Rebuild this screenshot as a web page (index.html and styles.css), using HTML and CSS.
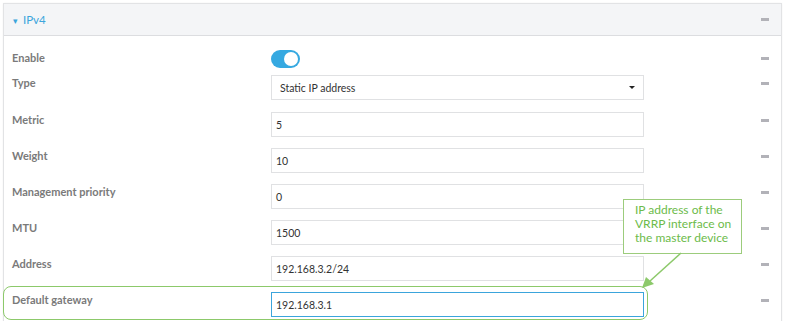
FILE: index.html
```html
<!DOCTYPE html>
<html lang="en">
<head>
  <meta charset="utf-8" />
  <title>IPv4</title>
  <link rel="stylesheet" href="styles.css">
</head>
<body>
  <div class="card">
    <div class="card-head">
      <span class="title"><span class="caret">&#9662;</span> IPv4</span>
      <span class="dash"></span>
    </div>

    <div class="rows">
      <div class="row row-toggle">
        <label>Enable</label>
        <div class="ctrl"><span class="toggle"><span class="knob"></span></span></div>
        <span class="dash"></span>
      </div>
      <div class="row row-type">
        <label>Type</label>
        <div class="ctrl"><div class="select">Static IP address<span class="arrow"></span></div></div>
        <span class="dash"></span>
      </div>
      <div class="row">
        <label>Metric</label>
        <div class="ctrl"><div class="input">5</div></div>
        <span class="dash"></span>
      </div>
      <div class="row">
        <label>Weight</label>
        <div class="ctrl"><div class="input">10</div></div>
        <span class="dash"></span>
      </div>
      <div class="row">
        <label>Management priority</label>
        <div class="ctrl"><div class="input">0</div></div>
        <span class="dash"></span>
      </div>
      <div class="row">
        <label>MTU</label>
        <div class="ctrl"><div class="input">1500</div></div>
        <span class="dash"></span>
      </div>
      <div class="row">
        <label>Address</label>
        <div class="ctrl"><div class="input">192.168.3.2/24</div></div>
        <span class="dash"></span>
      </div>
      <div class="row row-hl">
        <span class="highlight"></span>
        <label>Default gateway</label>
        <div class="ctrl"><div class="input focus">192.168.3.1</div></div>
        <span class="dash"></span>
      </div>
    </div>
  </div>

  <!-- annotation -->
  <div class="callout">IP address of the VRRP interface on the master device</div>
  <svg class="pointer" width="60" height="50" viewBox="0 0 60 50">
    <line x1="51" y1="2" x2="20" y2="30" stroke="#8cc96a" stroke-width="1.5" />
    <polygon points="12,37 16,26 24,33" fill="#8cc96a" />
  </svg>
</body>
</html>
```

FILE: styles.css
```css
body {
  margin: 0;
  background: #fff;
  font-family: Lato, "Open Sans", sans-serif;
  font-size: 11px;
  color: #333;
}
.card {
  margin: 3px 0 0 3px;
  width: 777px;
  height: 330px;
  border: 1px solid #e2e3e5;
  border-bottom: none;
  box-shadow: 0 0 2px rgba(0, 0, 0, 0.05);
}
.card-head {
  height: 31px;
  background: #f4f5f7;
  border-bottom: 1px solid #dcdde0;
  display: flex;
  align-items: center;
  justify-content: space-between;
  padding: 0 12px 0 9px;
}
.title {
  color: #3ba5dc;
  font-size: 11.5px;
}
.caret {
  font-size: 9px;
  margin-right: 2px;
}
.dash {
  display: block;
  width: 8px;
  height: 3px;
  background: #b2b2b8;
}
.rows {
  display: flex;
  flex-direction: column;
  gap: 11px;
  padding: 14px 12px 0 8px;
}
.row {
  display: grid;
  grid-template-columns: 259px 373px 1fr;
  align-items: start;
}
.row-toggle {
  margin-bottom: -4px;
}
.row-type {
  margin-bottom: 1px;
}
.row label {
  color: #7a7a7a;
  font-weight: 700;
  font-size: 11px;
  line-height: 16px;
}
.row .dash {
  justify-self: end;
  margin-top: 7px;
}
.toggle {
  display: block;
  width: 29px;
  height: 18px;
  border-radius: 9px;
  background: #36a9e1;
  position: relative;
}
.knob {
  position: absolute;
  right: 2px;
  top: 2px;
  width: 14px;
  height: 14px;
  border-radius: 50%;
  background: #fff;
}
.select,
.input {
  box-sizing: border-box;
  height: 25px;
  border: 1px solid #e0e1e3;
  padding: 0 8px;
  display: flex;
  align-items: center;
  color: #333;
  font-size: 10.5px;
  background: #fff;
}
.input {
  padding-left: 4px;
}
.select {
  justify-content: space-between;
}
.arrow {
  width: 0;
  height: 0;
  border-left: 3px solid transparent;
  border-right: 3px solid transparent;
  border-top: 3px solid #222;
}
.input.focus {
  border-color: #3ba5dc;
}
.row-hl {
  position: relative;
}
.highlight {
  position: absolute;
  left: -9px;
  top: -6px;
  width: 643px;
  height: 32px;
  border: 1.5px solid #8cc96a;
  border-radius: 8px;
}
.callout {
  position: absolute;
  left: 623px;
  top: 199px;
  width: 106px;
  height: 50px;
  padding: 3px 0 0 11px;
  border: 1.5px solid #9ccc7c;
  background: #fff;
  color: #6cbb4a;
  font-size: 12px;
  line-height: 14px;
}
.pointer {
  position: absolute;
  left: 630px;
  top: 251px;
}
```
